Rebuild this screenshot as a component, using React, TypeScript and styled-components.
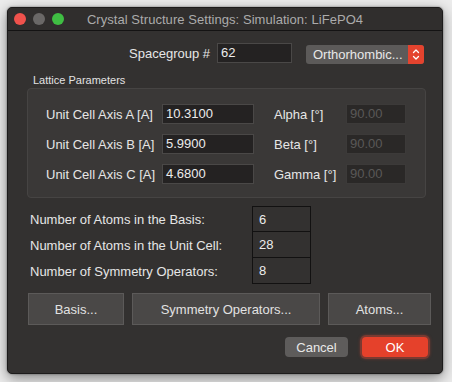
import React from "react";
import styled, { createGlobalStyle } from "styled-components";

const Global = createGlobalStyle`
  html, body { margin: 0; padding: 0; }
  body {
    background: #ececec;
    font-family: "Liberation Sans", Arial, sans-serif;
    width: 452px;
    height: 382px;
    overflow: hidden;
  }
`;

const Window = styled.div`
  margin: 7px 0 0 7px;
  width: 436px;
  height: 367px;
  box-sizing: border-box;
  background: #333130;
  border-radius: 5px;
  border: 1px solid #1c1b1b;
  box-shadow: 0 4px 14px rgba(0, 0, 0, 0.45), 0 0 2px rgba(0, 0, 0, 0.5);
  display: flex;
  flex-direction: column;
  overflow: hidden;
`;

const TitleBar = styled.div`
  position: relative;
  height: 22px;
  display: flex;
  align-items: center;
  justify-content: center;
  border-bottom: 1px solid #141313;
  background: #302e2d;
  flex-shrink: 0;
`;

const Lights = styled.div`
  position: absolute;
  left: 6px;
  top: 5px;
  display: flex;
  gap: 7px;
`;

const Light = styled.span<{ $c: string }>`
  width: 12px;
  height: 12px;
  border-radius: 50%;
  background: ${(p) => p.$c};
`;

const Title = styled.div`
  color: #ababab;
  font-size: 13px;
  letter-spacing: 0.05px;
`;

const Content = styled.div`
  display: flex;
  flex-direction: column;
`;

const SpaceRow = styled.div`
  display: flex;
  align-items: center;
  margin-top: 12px;
  height: 20px;
`;

const SpaceLabel = styled.div`
  width: 202px;
  text-align: right;
  color: #e6e6e6;
  font-size: 13px;
  margin-right: 7px;
  white-space: nowrap;
`;

const Field = styled.div<{ $w: number; $disabled?: boolean }>`
  width: ${(p) => p.$w}px;
  height: 20px;
  box-sizing: border-box;
  background: ${(p) => (p.$disabled ? "#2a2827" : "#242222")};
  border: 1px solid ${(p) => (p.$disabled ? "#3c3a39" : "#4a4847")};
  color: ${(p) => (p.$disabled ? "#5a5857" : "#ececec")};
  font-size: 13px;
  line-height: 18px;
  padding-left: 3px;
  white-space: nowrap;
`;

const Select = styled.div`
  margin-left: 14px;
  width: 118px;
  height: 19px;
  display: flex;
  border-radius: 3px;
  overflow: hidden;
  background: #5c5a59;
  margin-top: 2px;
`;

const SelectText = styled.div`
  flex: 1;
  color: #e8e8e8;
  font-size: 13px;
  line-height: 19px;
  padding-left: 7px;
  white-space: nowrap;
`;

const SelectStep = styled.div`
  width: 16px;
  background: #e4432e;
  display: flex;
  align-items: center;
  justify-content: center;
`;

const GroupLabel = styled.div`
  margin: 11px 0 0 25px;
  color: #e2e2e2;
  font-size: 11px;
  line-height: 13px;
`;

const Group = styled.div`
  margin: 1px 0 0 19px;
  width: 399px;
  box-sizing: border-box;
  background: #3a3837;
  border: 1px solid #464443;
  border-radius: 4px;
  padding: 15px 0 13px 18px;
  display: grid;
  grid-template-columns: 116px 92px 92px 60px;
  row-gap: 10px;
  align-items: center;
`;

const CellLabel = styled.div<{ $indent?: number }>`
  color: #e6e6e6;
  font-size: 13px;
  padding-left: ${(p) => p.$indent ?? 0}px;
  white-space: nowrap;
`;

const Counts = styled.div`
  margin: 8px 0 0 22px;
  display: grid;
  grid-template-columns: 222px 59px;
`;

const CountLabel = styled.div`
  color: #e6e6e6;
  font-size: 13px;
  display: flex;
  align-items: center;
  height: 26px;
  white-space: nowrap;
`;

const CountBox = styled.div<{ $first?: boolean }>`
  height: 26px;
  box-sizing: border-box;
  border: 1px solid #121111;
  border-top-width: ${(p) => (p.$first ? 1 : 0)}px;
  color: #ececec;
  font-size: 13px;
  padding-left: 6px;
  display: flex;
  align-items: center;
`;

const ButtonRow = styled.div`
  display: flex;
  margin: 9px 0 0 20px;
  gap: 8px;
`;

const BigButton = styled.div<{ $w: number }>`
  width: ${(p) => p.$w}px;
  height: 32px;
  box-sizing: border-box;
  background: #4a4847;
  border: 1px solid #5c5a59;
  color: #e2e2e2;
  font-size: 13px;
  display: flex;
  align-items: center;
  justify-content: center;
  white-space: nowrap;
`;

const Footer = styled.div`
  display: flex;
  justify-content: flex-end;
  gap: 14px;
  margin: 12px 14px 0 0;
`;

const Cancel = styled.div`
  width: 63px;
  height: 20px;
  border-radius: 4px;
  background: #5e5c5b;
  color: #e8e8e8;
  font-size: 13px;
  display: flex;
  align-items: center;
  justify-content: center;
`;

const Ok = styled.div`
  width: 66px;
  height: 20px;
  border-radius: 4px;
  background: #e5412b;
  color: #ffffff;
  font-size: 13px;
  display: flex;
  align-items: center;
  justify-content: center;
  box-shadow: 0 0 0 2px #7a3a31, 0 0 3px 2px rgba(200, 70, 50, 0.4);
`;

export default function App() {
  return (
    <>
      <Global />
      <Window>
        <TitleBar>
          <Lights>
            <Light $c="#f0524c" />
            <Light $c="#6a6867" />
            <Light $c="#3fbe43" />
          </Lights>
          <Title>Crystal Structure Settings: Simulation: LiFePO4</Title>
        </TitleBar>
        <Content>
          <SpaceRow>
            <SpaceLabel>Spacegroup #</SpaceLabel>
            <Field $w={75}>62</Field>
            <Select>
              <SelectText>Orthorhombic...</SelectText>
              <SelectStep>
                <svg width="8" height="13" viewBox="0 0 8 13" fill="none" stroke="#fff" strokeWidth="1.3" strokeLinecap="round" strokeLinejoin="round">
                  <path d="M1.5 4.5 L4 2 L6.5 4.5" />
                  <path d="M1.5 8.5 L4 11 L6.5 8.5" />
                </svg>
              </SelectStep>
            </Select>
          </SpaceRow>
          <GroupLabel>Lattice Parameters</GroupLabel>
          <Group>
            <CellLabel>Unit Cell Axis A [A]</CellLabel>
            <Field $w={92}>10.3100</Field>
            <CellLabel $indent={20}>Alpha [°]</CellLabel>
            <Field $w={60} $disabled>90.00</Field>
            <CellLabel>Unit Cell Axis B [A]</CellLabel>
            <Field $w={92}>5.9900</Field>
            <CellLabel $indent={20}>Beta [°]</CellLabel>
            <Field $w={60} $disabled>90.00</Field>
            <CellLabel>Unit Cell Axis C [A]</CellLabel>
            <Field $w={92}>4.6800</Field>
            <CellLabel $indent={20}>Gamma [°]</CellLabel>
            <Field $w={60} $disabled>90.00</Field>
          </Group>
          <Counts>
            <CountLabel>Number of Atoms in the Basis:</CountLabel>
            <CountBox $first>6</CountBox>
            <CountLabel>Number of Atoms in the Unit Cell:</CountLabel>
            <CountBox>28</CountBox>
            <CountLabel>Number of Symmetry Operators:</CountLabel>
            <CountBox>8</CountBox>
          </Counts>
          <ButtonRow>
            <BigButton $w={96}>Basis...</BigButton>
            <BigButton $w={188}>Symmetry Operators...</BigButton>
            <BigButton $w={103}>Atoms...</BigButton>
          </ButtonRow>
          <Footer>
            <Cancel>Cancel</Cancel>
            <Ok>OK</Ok>
          </Footer>
        </Content>
      </Window>
    </>
  );
}
